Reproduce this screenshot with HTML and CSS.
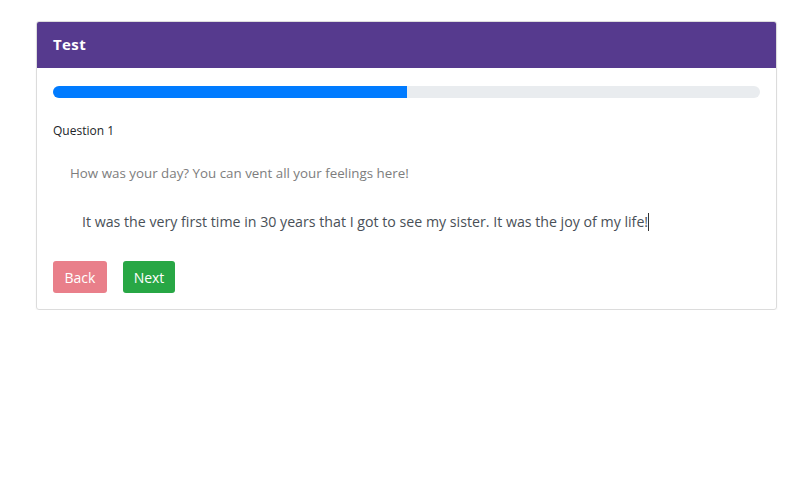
FILE: index.html
```html
<!DOCTYPE html>
<html>
<head>
<meta charset="utf-8">
<link rel="stylesheet" href="styles.css">
</head>
<body>
<div class="page">
  <div class="card">
    <div class="card-header">Test</div>
    <div class="card-body">
      <div class="progress"><div class="progress-bar" style="width: 50%"></div></div>
      <div class="question">Question 1</div>
      <div class="prompt">How was your day? You can vent all your feelings here!</div>
      <div class="answer">It was the very first time in 30 years that I got to see my sister. It was the joy of my life!<span class="caret"></span></div>
      <div class="actions">
        <button class="btn btn-back">Back</button>
        <button class="btn btn-next">Next</button>
      </div>
    </div>
  </div>
</div>
</body>
</html>
```
FILE: styles.css
```css
html, body {
  margin: 0;
  padding: 0;
  background: #ffffff;
}
body {
  font-family: "Open Sans", "DejaVu Sans", sans-serif;
  color: #212529;
}
.page {
  padding: 21px 29px 0 36px;
}
.card {
  border: 1px solid #dcdcdc;
  border-radius: 3px;
  overflow: hidden;
  box-shadow: 0 1px 2px rgba(0,0,0,0.05);
}
.card-header {
  background: #563a8e;
  color: #ffffff;
  font-weight: 700;
  font-size: 15px;
  height: 46px;
  line-height: 45px;
  padding: 0 16px;
  letter-spacing: 0.4px;
}
.card-body {
  padding: 18px 16px 16px 16px;
}
.progress {
  height: 12px;
  background: #e9ecef;
  border-radius: 6px;
  overflow: hidden;
}
.progress-bar {
  height: 100%;
  background: #007bff;
}
.question {
  font-size: 12px;
  margin-top: 25px;
  line-height: 16px;
  color: #212529;
}
.prompt {
  font-size: 13.35px;
  color: #7d7d7d;
  margin-top: 25px;
  padding-left: 17px;
  line-height: 18px;
}
.answer {
  font-size: 14.2px;
  color: #495057;
  margin-top: 30px;
  padding-left: 29px;
  line-height: 20px;
}
.caret {
  display: inline-block;
  width: 1px;
  height: 18px;
  background: #333;
  vertical-align: -4px;
}
.actions {
  display: flex;
  gap: 16px;
  margin-top: 29px;
}
.btn {
  font-family: inherit;
  font-size: 14px;
  color: #ffffff;
  border: none;
  border-radius: 3px;
  height: 32px;
  padding: 0 10px;
  font-weight: 500;
}
.btn-back {
  background: #e97f8a;
  width: 54px;
}
.btn-next {
  background: #28a745;
  width: 52px;
}
```
